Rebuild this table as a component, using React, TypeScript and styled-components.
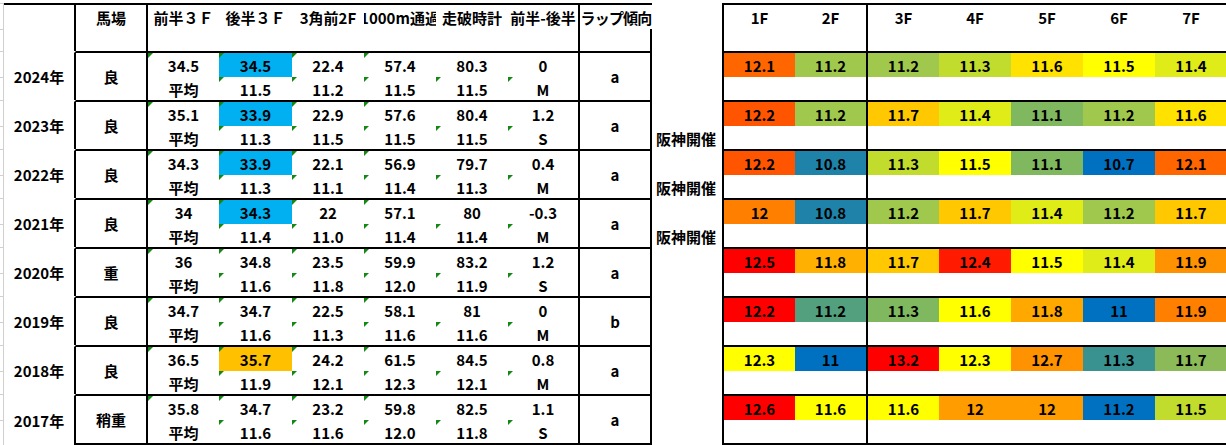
import React from 'react';
import styled, { createGlobalStyle } from 'styled-components';

const COLS =
  '4px 72px 72px 71px 73px 72px 72px 72px 72px 72px 70px 73px 73px 71px 72px 72px 72px 72px';

const GlobalStyle = createGlobalStyle`
  *, *::before, *::after { box-sizing: border-box; }
  html, body { margin: 0; padding: 0; background: #ffffff; overflow: hidden; }
  body {
    font-family: "Noto Sans CJK JP", "Liberation Sans", sans-serif;
    font-size: 15px;
    font-weight: 700;
    color: #000000;
  }
`;

const Sheet = styled.div`
  width: 1227px;
  padding-top: 3px;
  display: flex;
  flex-direction: column;
`;

const Row = styled.div`
  display: grid;
  grid-template-columns: ${COLS};
`;

const GridStrip = styled.div`
  display: flex;
  flex-direction: column;
  border-right: 1px solid #d0d0d0;
`;

const StripTick = styled.div<{ $h: number }>`
  height: ${(p) => p.$h}px;
  border-top: 1px solid #d0d0d0;
  flex: ${(p) => (p.$h === 0 ? '1' : 'none')};
`;

const Cell = styled.div<{
  $top?: boolean;
  $right?: boolean;
  $left?: boolean;
  $bottom?: boolean;
  $center?: boolean;
}>`
  position: relative;
  min-width: 0;
  display: flex;
  flex-direction: column;
  justify-content: ${(p) => (p.$center ? 'center' : 'flex-start')};
  align-items: stretch;
  border-top: 2px solid ${(p) => (p.$top ? '#000' : 'transparent')};
  border-right: ${(p) => (p.$right ? '2px solid #000' : 'none')};
  border-left: ${(p) => (p.$left ? '2px solid #000' : 'none')};
  border-bottom: ${(p) => (p.$bottom ? '2px solid #000' : 'none')};
`;

const Sub = styled.div<{
  $h: number;
  $bg?: string;
  $left?: boolean;
  $spill?: boolean;
  $rule?: boolean;
  $low?: boolean;
}>`
  position: relative;
  height: ${(p) => p.$h}px;
  flex: none;
  display: flex;
  align-items: center;
  justify-content: ${(p) => (p.$left ? 'flex-start' : 'center')};
  padding-left: ${(p) => (p.$left ? '4px' : '0')};
  padding-top: ${(p) => (p.$low ? '2px' : '0')};
  background: ${(p) => p.$bg || 'transparent'};
  white-space: nowrap;
  overflow: ${(p) => (p.$spill ? 'visible' : 'hidden')};
  border-right: ${(p) => (p.$rule ? '2px solid #000' : 'none')};
  line-height: 1;
`;

const Label = styled.span<{ $tight?: boolean }>`
  display: block;
  line-height: 1;
  letter-spacing: ${(p) => (p.$tight ? '-0.8px' : 'normal')};
`;

const Flag = styled.span`
  position: absolute;
  top: 0;
  left: 0;
  width: 0;
  height: 0;
  border-top: 5px solid #128a12;
  border-right: 5px solid transparent;
  z-index: 1;
`;

type RowData = {
  year: string;
  baba: string;
  cols: [string, string][];
  lap: string;
  note?: string;
  hl?: string;
  laps: [string, string][];
};

const BLUE = '#00B0F0';
const AMBER = '#FFC000';

const P = {
  red: '#FF0000',
  red2: '#FF1A00',
  orR: '#FF5500',
  or1: '#FF6600',
  or2: '#FF8000',
  or3: '#FF9200',
  or4: '#FF9C00',
  amb: '#FFB000',
  amb2: '#FFA800',
  gold: '#FFC800',
  yel2: '#FFE200',
  yel: '#FFFF00',
  ly: '#E0EC18',
  yg: '#C2DC2E',
  g1: '#A0C84C',
  g2: '#80B860',
  g3: '#8CBA58',
  teal: '#53A07E',
  teal2: '#3A9290',
  tb: '#1F82A8',
  blue: '#0070C0',
};

const rows: RowData[] = [
  {
    year: '2024年', baba: '良', lap: 'a', hl: BLUE,
    cols: [['34.5', '平均'], ['34.5', '11.5'], ['22.4', '11.2'], ['57.4', '11.5'], ['80.3', '11.5'], ['0', 'M']],
    laps: [['12.1', P.or1], ['11.2', P.g1], ['11.2', P.g1], ['11.3', P.yg], ['11.6', P.yel2], ['11.5', P.yel], ['11.4', P.ly]],
  },
  {
    year: '2023年', baba: '良', lap: 'a', hl: BLUE, note: '阪神開催',
    cols: [['35.1', '平均'], ['33.9', '11.3'], ['22.9', '11.5'], ['57.6', '11.5'], ['80.4', '11.5'], ['1.2', 'S']],
    laps: [['12.2', P.orR], ['11.2', P.g1], ['11.7', P.gold], ['11.4', P.ly], ['11.1', P.g2], ['11.2', P.g1], ['11.6', P.yel2]],
  },
  {
    year: '2022年', baba: '良', lap: 'a', hl: BLUE, note: '阪神開催',
    cols: [['34.3', '平均'], ['33.9', '11.3'], ['22.1', '11.1'], ['56.9', '11.4'], ['79.7', '11.3'], ['0.4', 'M']],
    laps: [['12.2', P.orR], ['10.8', P.tb], ['11.3', P.yg], ['11.5', P.yel], ['11.1', P.g2], ['10.7', P.blue], ['12.1', P.or1]],
  },
  {
    year: '2021年', baba: '良', lap: 'a', hl: BLUE, note: '阪神開催',
    cols: [['34', '平均'], ['34.3', '11.4'], ['22', '11.0'], ['57.1', '11.4'], ['80', '11.4'], ['-0.3', 'M']],
    laps: [['12', P.or2], ['10.8', P.tb], ['11.2', P.g1], ['11.7', P.gold], ['11.4', P.ly], ['11.2', P.g1], ['11.7', P.gold]],
  },
  {
    year: '2020年', baba: '重', lap: 'a',
    cols: [['36', '平均'], ['34.8', '11.6'], ['23.5', '11.8'], ['59.9', '12.0'], ['83.2', '11.9'], ['1.2', 'S']],
    laps: [['12.5', P.red], ['11.8', P.amb], ['11.7', P.gold], ['12.4', P.red2], ['11.5', P.yel], ['11.4', P.ly], ['11.9', P.or3]],
  },
  {
    year: '2019年', baba: '良', lap: 'b',
    cols: [['34.7', '平均'], ['34.7', '11.6'], ['22.5', '11.3'], ['58.1', '11.6'], ['81', '11.6'], ['0', 'M']],
    laps: [['12.2', P.red], ['11.2', P.teal], ['11.3', P.g2], ['11.6', P.yel], ['11.8', P.amb2], ['11', P.blue], ['11.9', P.or2]],
  },
  {
    year: '2018年', baba: '良', lap: 'a', hl: AMBER,
    cols: [['36.5', '平均'], ['35.7', '11.9'], ['24.2', '12.1'], ['61.5', '12.3'], ['84.5', '12.1'], ['0.8', 'M']],
    laps: [['12.3', P.yel], ['11', P.blue], ['13.2', P.red], ['12.3', P.yel], ['12.7', P.or3], ['11.3', P.teal2], ['11.7', P.g3]],
  },
  {
    year: '2017年', baba: '稍重', lap: 'a',
    cols: [['35.8', '平均'], ['34.7', '11.6'], ['23.2', '11.6'], ['59.8', '12.0'], ['82.5', '11.8'], ['1.1', 'S']],
    laps: [['12.6', P.red], ['11.6', P.yel], ['11.6', P.yel], ['12', P.or4], ['12', P.or4], ['11.2', P.blue], ['11.5', P.yg]],
  },
];

const FLAGS: [boolean, boolean][] = [
  [true, false],
  [true, true],
  [true, true],
  [true, true],
  [false, true],
  [false, true],
];

const HEAD = ['前半３Ｆ', '後半３Ｆ', '3角前2F', '1000m通過', '走破時計', '前半-後半'];
const LAP_HEAD = ['1F', '2F', '3F', '4F', '5F', '6F', '7F'];

const H1 = 24;
const H2 = 23;
const HH2 = 22;

function HeaderRow() {
  return (
    <Row>
      <GridStrip>
        <StripTick $h={H1 + 2} />
        <StripTick $h={HH2} />
      </GridStrip>
      <Cell $top $right />
      <Cell $top $right>
        <Sub $h={H1}><Label>馬場</Label></Sub>
        <Sub $h={HH2} />
      </Cell>
      {HEAD.map((h, i) => (
        <Cell key={h} $top $right={i === 5}>
          <Sub $h={H1}><Label>{h}</Label></Sub>
          <Sub $h={HH2} />
        </Cell>
      ))}
      <Cell $top>
        <Sub $h={H1} $spill><Label $tight>ラップ傾向</Label></Sub>
        <Sub $h={HH2} $rule />
      </Cell>
      <Cell />
      {LAP_HEAD.map((h, i) => (
        <Cell key={h} $top $left={i === 0} $right={i === 1}>
          <Sub $h={H1}><Label>{h}</Label></Sub>
          <Sub $h={HH2} />
        </Cell>
      ))}
    </Row>
  );
}

function DataRow({ d, last }: { d: RowData; last: boolean }) {
  return (
    <Row>
      <GridStrip>
        <StripTick $h={H1 + 2} />
        <StripTick $h={0} />
      </GridStrip>
      <Cell $right $center>
        <Sub $h={H1}><Label>{d.year}</Label></Sub>
      </Cell>
      <Cell $top $right $center $bottom={last}>
        <Sub $h={H1}><Label>{d.baba}</Label></Sub>
      </Cell>
      {d.cols.map(([a, b], i) => (
        <Cell key={i} $top $right={i === 5} $bottom={last}>
          <Sub $h={H1} $bg={i === 1 ? d.hl : undefined}>
            {FLAGS[i][0] && <Flag />}
            <Label>{a}</Label>
          </Sub>
          <Sub $h={H2} $low>
            {FLAGS[i][1] && <Flag />}
            <Label>{b}</Label>
          </Sub>
        </Cell>
      ))}
      <Cell $top $right $center $bottom={last}>
        <Sub $h={H1}><Label>{d.lap}</Label></Sub>
      </Cell>
      <Cell>
        <Sub $h={H1} />
        <Sub $h={H2} $left $spill $low>
          {d.note && <Label>{d.note}</Label>}
        </Sub>
      </Cell>
      {d.laps.map(([v, c], i) => (
        <Cell key={i} $top $left={i === 0} $right={i === 1} $bottom={last}>
          <Sub $h={H1} $bg={c}><Label>{v}</Label></Sub>
          <Sub $h={H2} />
        </Cell>
      ))}
    </Row>
  );
}

export default function App() {
  return (
    <>
      <GlobalStyle />
      <Sheet>
        <HeaderRow />
        {rows.map((d, i) => (
          <DataRow key={d.year} d={d} last={i === rows.length - 1} />
        ))}
      </Sheet>
    </>
  );
}
